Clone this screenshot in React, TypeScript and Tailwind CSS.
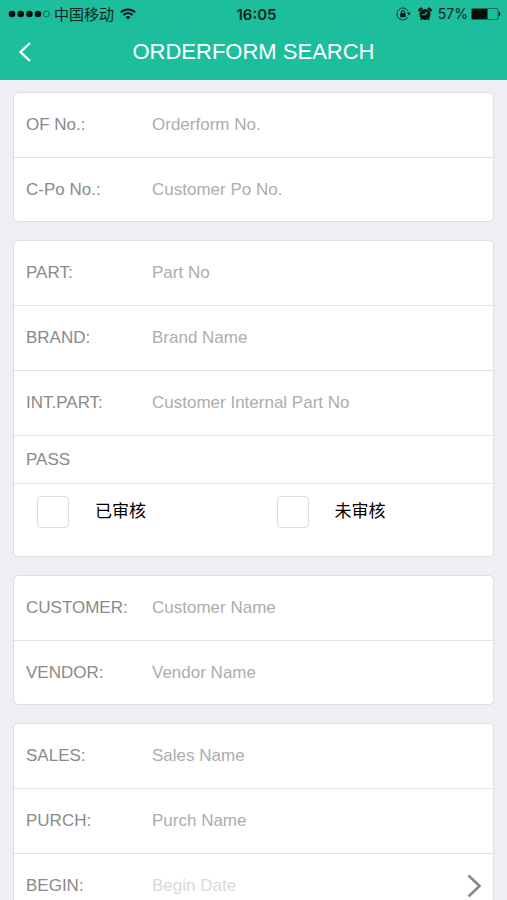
import { useState } from "react";
import type { ReactNode } from "react";

const Card = ({ children }: { children: ReactNode }) => (
  <section className="rounded-[5px] border border-[#dfdfe2] bg-white">
    {children}
  </section>
);

type FieldProps = {
  id: string;
  label: string;
  placeholder: string;
  last?: boolean;
};

const Field = ({ id, label, placeholder, last }: FieldProps) => (
  <div
    className={`flex items-center pl-3 pr-4 ${
      last ? "h-[63px]" : "h-[65px] border-b border-[#e2e2e4]"
    }`}
  >
    <label htmlFor={id} className="w-[126px] shrink-0 text-[#8a8a8a]">
      {label}
    </label>
    <input
      id={id}
      type="text"
      placeholder={placeholder}
      className="min-w-0 flex-1 bg-transparent text-[#555] outline-none placeholder:text-[#adadad]"
    />
  </div>
);

const DateField = ({ id, label, placeholder }: FieldProps) => (
  <div className="flex h-[65px] items-center border-b border-[#e2e2e4] pl-3 pr-[11px]">
    <label htmlFor={id} className="w-[126px] shrink-0 text-[#8a8a8a]">
      {label}
    </label>
    <button
      id={id}
      type="button"
      className="flex flex-1 items-center justify-between text-left text-[#d9d9d9]"
    >
      {placeholder}
      <svg width="16" height="24" viewBox="0 0 16 24" fill="none" aria-hidden="true">
        <path d="M2.5 1.5 13.5 12 2.5 22.5" stroke="#8a8a8a" strokeWidth="2.6" />
      </svg>
    </button>
  </div>
);

type CheckProps = {
  label: string;
  checked: boolean;
  onChange: (checked: boolean) => void;
};

const Check = ({ label, checked, onChange }: CheckProps) => (
  <label className="flex h-8 items-center gap-[26px] pl-[23px] text-black">
    <input
      type="checkbox"
      checked={checked}
      onChange={(e) => onChange(e.target.checked)}
      className="size-8 appearance-none rounded-[4px] border border-[#dcdcdc] bg-white checked:bg-[#1dbe9c]"
    />
    {label}
  </label>
);

const StatusBar = () => (
  <div className="flex h-7 items-center pl-2 pr-[6px] leading-none text-[#0b241e]">
    <div className="flex flex-1 items-center">
      <svg width="42" height="8" viewBox="0 0 42 8" aria-hidden="true">
        <g fill="#06110e">
          <circle cx="4" cy="4" r="3.3" />
          <circle cx="12.7" cy="4" r="3.3" />
          <circle cx="21.4" cy="4" r="3.3" />
          <circle cx="30" cy="4" r="3.3" />
        </g>
        <circle cx="38.4" cy="4" r="3" fill="none" stroke="#0b4437" strokeWidth="0.7" />
      </svg>
      <span className="ml-1 text-[15px]">中国移动</span>
      <svg className="ml-1.5" width="16" height="12" viewBox="0 0 16 12" fill="none" aria-hidden="true">
        <path d="M1 4.3a10 10 0 0 1 14 0" stroke="#06110e" strokeWidth="1.9" />
        <path d="M3.5 7a6.4 6.4 0 0 1 9 0" stroke="#06110e" strokeWidth="1.8" />
        <path d="M8 11.6 5.6 9.1a3.4 3.4 0 0 1 4.8 0z" fill="#06110e" />
      </svg>
    </div>
    <span className="pl-1 font-['Inter','Liberation_Sans',sans-serif] text-[15px] font-semibold">
      16:05
    </span>
    <div className="flex flex-1 items-center justify-end">
      <svg width="15" height="14" viewBox="0 0 15 14" fill="none" aria-hidden="true">
        <path d="M12.1 4a6 6 0 1 0 0 6" stroke="#0b3a30" strokeWidth="1" />
        <path d="M10.9 5.4h3.8l-1.7 3.2z" fill="#0b241e" />
        <rect x="4.2" y="6.2" width="5.4" height="4" rx="0.4" fill="#06110e" />
        <path d="M5.3 6.4V5.2a1.6 1.6 0 0 1 3.2 0v1.2" stroke="#06110e" strokeWidth="1" />
      </svg>
      <svg className="ml-[7px]" width="14" height="14" viewBox="0 0 14 14" fill="none" aria-hidden="true">
        <circle cx="7" cy="7.4" r="5.5" fill="#06110e" />
        <path d="M1 5a2.4 2.4 0 0 1 3.8-3.4zM13 5a2.4 2.4 0 0 0-3.8-3.4z" fill="#06110e" />
        <path d="m4 11.2-1.2 1.6M10 11.2l1.2 1.6" stroke="#06110e" strokeWidth="1.4" />
        <path d="M4.4 7.6H7l2.2-2.8" stroke="#1dbe9c" strokeWidth="1.1" />
      </svg>
      <span className="ml-1.5 font-['Inter','Liberation_Sans',sans-serif] text-[14px]">57%</span>
      <svg className="ml-[3px]" width="30" height="12" viewBox="0 0 30 12" fill="none" aria-hidden="true">
        <rect x="0.5" y="0.5" width="26.5" height="11" rx="1" stroke="#0e5b4a" strokeWidth="0.8" />
        <rect x="1" y="1" width="15.5" height="10" fill="#06110e" />
        <path d="M27.6 3.6a2.5 2.5 0 0 1 0 4.8z" fill="#06110e" />
      </svg>
    </div>
  </div>
);

const App = () => {
  const [approved, setApproved] = useState(false);
  const [pending, setPending] = useState(false);

  return (
    <div className="flex h-screen flex-col overflow-hidden bg-[#eeeef3] font-['Liberation_Sans','Noto_Sans_CJK_SC',sans-serif] text-[17px] leading-6">
      <header className="h-20 shrink-0 bg-[#1dbe9c]">
        <StatusBar />
        <div className="grid h-12 grid-cols-[48px_1fr_48px] items-center">
          <button type="button" aria-label="Back" className="flex h-12 items-center pl-[18px]">
            <svg width="14" height="20" viewBox="0 0 14 20" fill="none" aria-hidden="true">
              <path d="M12 1 2.5 10 12 19" stroke="#fff" strokeWidth="2.4" />
            </svg>
          </button>
          <h1 className="text-center text-[22px] text-white">ORDERFORM SEARCH</h1>
        </div>
      </header>

      <main className="flex-1 overflow-y-auto px-[13px] pt-3 [scrollbar-width:none]">
        <form className="flex flex-col gap-[18px]">
          <Card>
            <Field id="of-no" label="OF No.:" placeholder="Orderform No." />
            <Field id="cpo-no" label="C-Po No.:" placeholder="Customer Po No." last />
          </Card>

          <Card>
            <Field id="part" label="PART:" placeholder="Part No" />
            <Field id="brand" label="BRAND:" placeholder="Brand Name" />
            <Field id="int-part" label="INT.PART:" placeholder="Customer Internal Part No" />
            <fieldset>
              <legend className="flex h-12 w-full items-center border-b border-[#e2e2e4] px-3 text-[#8a8a8a]">
                PASS
              </legend>
              <div className="grid h-[72px] grid-cols-2 pt-3">
                <Check label="已审核" checked={approved} onChange={setApproved} />
                <Check label="未审核" checked={pending} onChange={setPending} />
              </div>
            </fieldset>
          </Card>

          <Card>
            <Field id="customer" label="CUSTOMER:" placeholder="Customer Name" />
            <Field id="vendor" label="VENDOR:" placeholder="Vendor Name" last />
          </Card>

          <Card>
            <Field id="sales" label="SALES:" placeholder="Sales Name" />
            <Field id="purch" label="PURCH:" placeholder="Purch Name" />
            <DateField id="begin" label="BEGIN:" placeholder="Begin Date" />
          </Card>
        </form>
      </main>
    </div>
  );
};

export default App;
